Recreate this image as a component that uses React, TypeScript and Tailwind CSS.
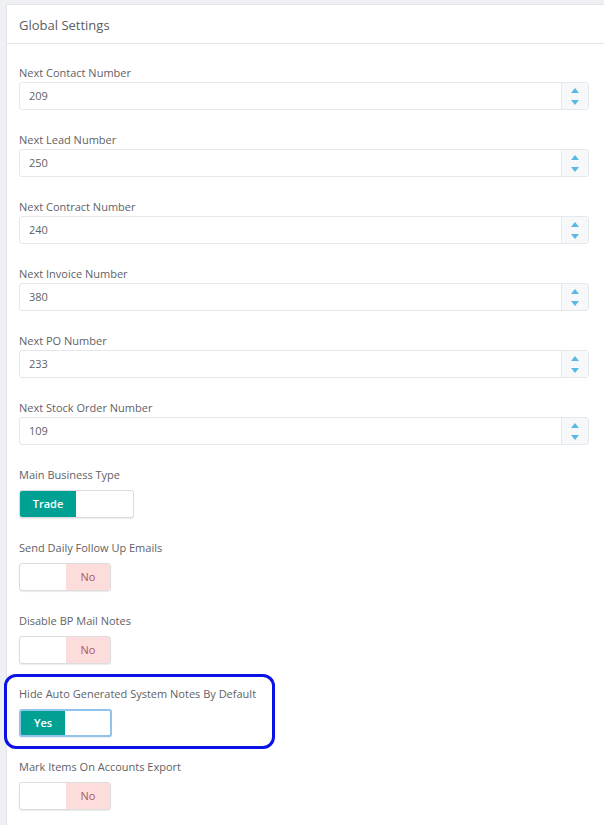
import React from 'react';

const numberFields = [
  { label: 'Next Contact Number', value: '209' },
  { label: 'Next Lead Number', value: '250' },
  { label: 'Next Contract Number', value: '240' },
  { label: 'Next Invoice Number', value: '380' },
  { label: 'Next PO Number', value: '233' },
  { label: 'Next Stock Order Number', value: '109' },
];

function Spinner() {
  return (
    <div className="flex w-[27px] flex-col items-center justify-center gap-[7px] border-l border-[#e6e8ec] bg-[#f7f8fa]">
      <svg width="8" height="5" viewBox="0 0 8 5">
        <path d="M4 0 L8 5 L0 5 Z" fill="#5ab8e6" />
      </svg>
      <svg width="8" height="5" viewBox="0 0 8 5">
        <path d="M0 0 L8 0 L4 5 Z" fill="#5ab8e6" />
      </svg>
    </div>
  );
}

function NumberField({ label, value }: { label: string; value: string }) {
  return (
    <div className="mb-[22px]">
      <div className="mb-px h-[16px] text-[11px] leading-[16px] text-[#5f6266]">{label}</div>
      <div className="flex h-[28px] overflow-hidden rounded-[3px] border border-[#e4e7eb] bg-white">
        <div className="flex flex-1 items-center pl-[9px] text-[11px] text-[#606366]">{value}</div>
        <Spinner />
      </div>
    </div>
  );
}

function YesToggle({ text, width, onWidth, focused }: { text: string; width: string; onWidth: string; focused?: boolean }) {
  return (
    <div
      className={`flex h-[28px] overflow-hidden rounded-[3px] bg-white shadow-[0_1px_1px_rgba(0,0,0,0.08)] ${width} ${
        focused ? 'border-2 border-[#8fc3ee]' : 'border border-[#dcdcdc]'
      }`}
    >
      <div className={`flex items-center justify-center bg-[#00a193] text-[11px] font-semibold text-white ${onWidth}`}>
        {text}
      </div>
      <div className="flex-1" />
    </div>
  );
}

function NoToggle() {
  return (
    <div className="flex h-[28px] w-[92px] overflow-hidden rounded-[3px] border border-[#dcdcdc] bg-white shadow-[0_1px_1px_rgba(0,0,0,0.08)]">
      <div className="flex-1" />
      <div className="flex w-[44px] items-center justify-center bg-[#fddcdc] text-[11px] text-[#a85a5a]">No</div>
    </div>
  );
}

function ToggleField({ label, children }: { label: string; children: React.ReactNode }) {
  return (
    <div className="mb-[22px]">
      <div className="mb-[7px] h-[16px] text-[11px] leading-[16px] text-[#5f6266]">{label}</div>
      {children}
    </div>
  );
}

export default function App() {
  return (
    <div
      className="h-[825px] overflow-hidden bg-[#eef0f3] pl-[6px] pt-[4px]"
      style={{ fontFamily: '"Open Sans", "Noto Sans", sans-serif' }}
    >
      <div className="min-h-full border-l border-t border-[#e3e5e9] bg-white">
        <div className="flex h-[39px] items-center border-b border-[#e3e5e9] px-[12px] pt-[3px] text-[13px] text-[#5a5d61]">
          Global Settings
        </div>
        <div className="pl-[12px] pr-[15px] pt-[21px]">
          {numberFields.map((f) => (
            <NumberField key={f.label} label={f.label} value={f.value} />
          ))}
          <ToggleField label="Main Business Type">
            <YesToggle text="Trade" width="w-[115px]" onWidth="w-[56px]" />
          </ToggleField>
          <ToggleField label="Send Daily Follow Up Emails">
            <NoToggle />
          </ToggleField>
          <ToggleField label="Disable BP Mail Notes">
            <NoToggle />
          </ToggleField>
          <div className="relative">
            <span className="pointer-events-none absolute left-[-15px] top-[-12px] h-[75px] w-[271px] rounded-[12px] border-[3px] border-[#0a12e6]" />
            <ToggleField label="Hide Auto Generated System Notes By Default">
              <YesToggle text="Yes" width="w-[93px]" onWidth="w-[44px]" focused />
            </ToggleField>
          </div>
          <ToggleField label="Mark Items On Accounts Export">
            <NoToggle />
          </ToggleField>
        </div>
      </div>
    </div>
  );
}
